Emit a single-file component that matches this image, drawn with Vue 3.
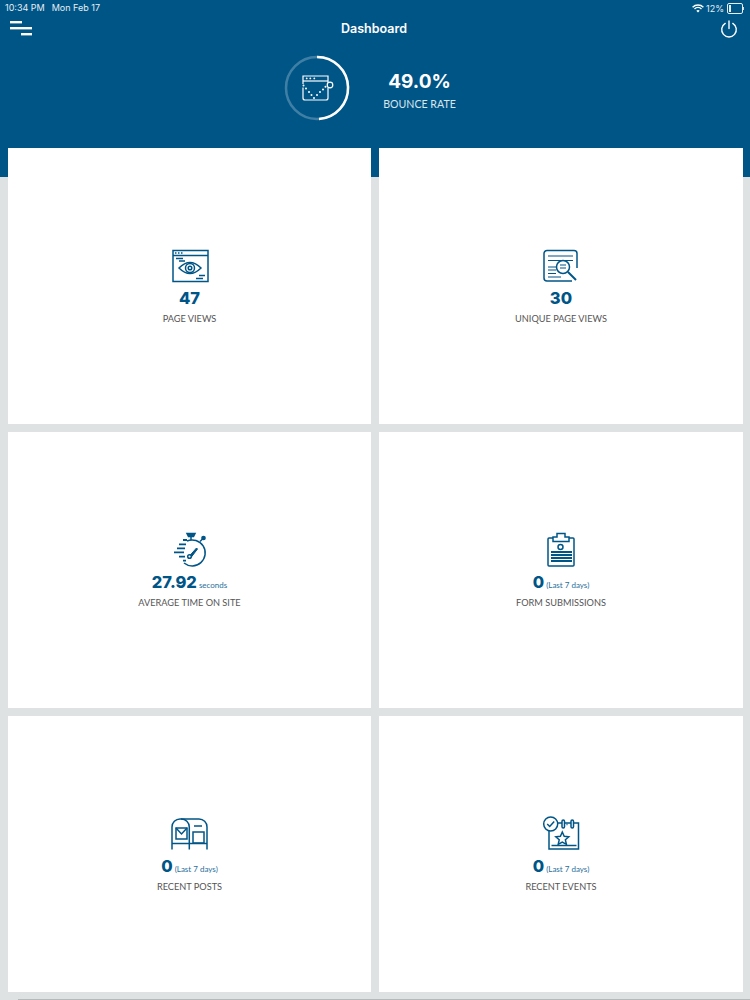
<script setup>
const cards = [
  { icon: 'views', value: '47', label: 'PAGE VIEWS' },
  { icon: 'unique', value: '30', label: 'UNIQUE PAGE VIEWS' },
  { icon: 'time', value: '27.92', unit: 'seconds', label: 'AVERAGE TIME ON SITE' },
  { icon: 'forms', value: '0', unit: '(Last 7 days)', label: 'FORM SUBMISSIONS' },
  { icon: 'posts', value: '0', unit: '(Last 7 days)', label: 'RECENT POSTS' },
  { icon: 'events', value: '0', unit: '(Last 7 days)', label: 'RECENT EVENTS' },
]
</script>

<template>
  <div class="page">
    <header class="top">
      <div class="status">
        <span class="time">10:34 PM</span>
        <span class="date">Mon Feb 17</span>
        <span class="status-right">
          <svg class="wifi" width="12" height="9" viewBox="0 0 12 9">
            <path d="M0.6 3.2a7.6 7.6 0 0 1 10.8 0" fill="none" stroke="#fff" stroke-width="1.4" />
            <path d="M2.5 5a5 5 0 0 1 7 0" fill="none" stroke="#fff" stroke-width="1.4" />
            <path d="M4.3 6.8a2.4 2.4 0 0 1 3.4 0L6 8.6z" fill="#fff" />
          </svg>
          <span>12%</span>
          <span class="battery"><i></i></span>
          <span class="nub"></span>
        </span>
      </div>

      <div class="nav">
        <svg width="24" height="16" viewBox="0 0 24 16" fill="#fff">
          <rect x="0" y="0" width="12" height="2.4" />
          <rect x="0" y="6" width="22" height="2.4" />
          <rect x="11" y="12" width="11" height="2.4" />
        </svg>
        <span class="title">Dashboard</span>
        <svg class="power" width="18" height="18" viewBox="0 0 18 18" fill="none" stroke="#fff" stroke-width="1.4" stroke-linecap="round">
          <path d="M5.2 3.4a7.3 7.3 0 1 0 7.6 0" />
          <path d="M9 1v7.6" />
        </svg>
      </div>

      <div class="bounce">
        <svg class="ring" width="68" height="68" viewBox="0 0 68 68">
          <circle cx="34" cy="34" r="31" fill="none" stroke="#fff" stroke-opacity="0.25" stroke-width="2.5" />
          <path d="M34 3a31 31 0 0 1 2 61.94" fill="none" stroke="#fff" stroke-width="2.5" />
          <g fill="none" stroke="#fff" stroke-width="1.2">
            <path d="M20 30V22h25v6.500" />
            <path d="M20 33.500V44a2 2 0 0 0 2 2h21a2 2 0 0 0 2-2V33.500" />
            <path d="M20 27h25" />
            <circle cx="47" cy="31" r="2.800" />
          </g>
          <g fill="#fff">
            <circle cx="23.700" cy="24.400" r="0.9" /><circle cx="27.300" cy="24.400" r="0.9" /><circle cx="31.300" cy="24.400" r="0.9" />
            <circle cx="20.500" cy="31.500" r="1" /><circle cx="23" cy="34.500" r="1" /><circle cx="26" cy="38" r="1" />
            <circle cx="28.500" cy="41" r="1" /><circle cx="31" cy="44" r="1" /><circle cx="34" cy="41" r="1" />
            <circle cx="37" cy="38" r="1" /><circle cx="40" cy="35.500" r="1" /><circle cx="42.500" cy="32.700" r="1" />
          </g>
        </svg>
        <div class="bounce-text">
          <div class="bounce-value">49.0%</div>
          <div class="bounce-label">BOUNCE RATE</div>
        </div>
      </div>
    </header>

    <main class="grid">
      <section v-for="c in cards" :key="c.label" class="card">
        <svg class="icon" width="40" height="36" viewBox="0 0 40 36" fill="none" stroke="#005587" stroke-width="1.5">
          <template v-if="c.icon === 'views'">
            <rect x="3" y="2.500" width="35" height="31" />
            <path d="M3 7.500h35" />
            <path d="M5 5h1.500M8 5h1.500M11 5h1.500" />
            <path d="M6 10.500h7M9 13h6M29 27.500h6M26 30.500h7" />
            <path d="M9 20q11-11 22 0q-11 11-22 0z" />
            <circle cx="20" cy="20" r="4.500" />
            <circle cx="20" cy="20" r="1.800" />
          </template>
          <template v-else-if="c.icon === 'unique'">
            <path d="M36 20V5.500a3 3 0 0 0-3-3H6a3 3 0 0 0-3 3V30a3 3 0 0 0 3 3h25" />
            <path d="M7 8h25M7 12.500h25M7 19h8M7 22h8M7 25.500h8M7 29h13" stroke-width="1.200" />
            <circle cx="22" cy="19" r="6.500" />
            <path d="M19 17h6M19 20h6" stroke-width="1" />
            <path d="M27 24l8 8" stroke-width="2" />
          </template>
          <template v-else-if="c.icon === 'time'">
            <path d="M17 9a13 13 0 1 1-3 22" />
            <path d="M17 1.500h8l-1.500 3h-5zM21 4v4" fill="#005587" />
            <path d="M30 9.500l3-3" stroke-width="1.500" />
            <circle cx="33.500" cy="6" r="1.600" fill="#005587" />
            <path d="M19 24.500l7.500-8.500 1 1-6.500 8.500z" fill="#005587" stroke-width="1" />
            <circle cx="19.500" cy="24.500" r="1.800" fill="#fff" />
            <path d="M13 8h4M9 12.300h7M7 16.300h8M4 20.300h10M9 24.700h6M13 28.700h3" stroke-width="1.800" />
          </template>
          <template v-else-if="c.icon === 'forms'">
            <path d="M12 6H8a1 1 0 0 0-1 1v26a1 1 0 0 0 1 1h24a1 1 0 0 0 1-1V7a1 1 0 0 0-1-1h-4" />
            <path d="M12 9.500V5h4V1.500h8V5h4v4.500z" />
            <circle cx="19.500" cy="15" r="2.500" />
            <path d="M10 20h21M10 23h21M10 26h21M10 29h21" stroke-width="1.800" />
          </template>
          <template v-else-if="c.icon === 'posts'">
            <path d="M2 33.500V11a8 8 0 0 1 8-8h19a8 8 0 0 1 8 8v22.500" />
            <path d="M19.300 11v22.500M2 27.500h35" />
            <path d="M11 3a8 8 0 0 1 8.300 8" />
            <rect x="6" y="12" width="11" height="11" />
            <path d="M6 12l5.500 6 5.500-6" />
            <rect x="23" y="16" width="11" height="11" />
            <path d="M24 10h8" />
          </template>
          <template v-else>
            <path d="M14 7h23.500v26H8V15" />
            <rect x="21" y="4" width="2.500" height="8" rx="1.200" fill="#fff" />
            <rect x="30" y="4" width="2.500" height="8" rx="1.200" fill="#fff" />
            <path d="M25.500 8.500h1" />
            <circle cx="9.700" cy="8" r="7" fill="#fff" />
            <path d="M6.200 8l2.500 2.500 4.500-5" />
            <path d="M21.300 16l1.900 4.200 4.600.5-3.400 3.100 1 4.500-4.100-2.300-4.100 2.300 1-4.500-3.400-3.100 4.600-.5z" />
            <path d="M10.500 29.500h25" />
          </template>
        </svg>
        <div class="value-row">
          <span class="value">{{ c.value }}</span>
          <span v-if="c.unit" class="unit">{{ c.unit }}</span>
        </div>
        <div class="label">{{ c.label }}</div>
      </section>
    </main>
    <div class="home-line"></div>
  </div>
</template>

<style>
body { background: #dfe2e2; }
</style>

<style scoped>
.page { width: 750px; height: 1000px; background: #dfe2e2; font-family: Inter, "Liberation Sans", sans-serif; overflow: hidden; }
.top { height: 177px; background: #005587; color: #fff; box-sizing: border-box; }

.status { display: flex; height: 14px; padding: 1px 6px 0 5px; font-size: 9px; line-height: 13px; color: #e6eef3; }
.date { margin-left: 7px; }
.status-right { margin-left: auto; display: flex; align-items: center; gap: 2px; }
.battery { width: 12px; height: 7px; border: 1px solid #fff; border-radius: 2px; display: block; padding: 1px; opacity: 0.9; margin-left: 1px; }
.battery i { display: block; width: 2px; height: 7px; background: #fff; }
.nub { width: 1px; height: 3px; background: #fff; margin-left: -2px; opacity: 0.8; }

.nav { display: grid; grid-template-columns: 1fr auto 1fr; align-items: center; height: 28px; padding: 0 12px 0 10px; }
.title { font-size: 12.5px; font-weight: 600; padding-bottom: 2px; }
.power { justify-self: end; }

.bounce { display: flex; align-items: center; justify-content: center; gap: 32px; margin-top: 11px; padding-right: 11px; }
.bounce-text { text-align: center; }
.bounce-value { font-size: 19px; font-weight: 700; line-height: 24px; padding-top: 3px; }
.bounce-label { font-family: Lato, "Liberation Sans", sans-serif; font-size: 10.6px; color: #d8e6ee; margin-top: 4px; }

.grid { display: grid; grid-template-columns: 363px 364px; grid-auto-rows: 276px; gap: 8px; padding-left: 8px; margin-top: -29px; }
.card { background: #fff; display: flex; flex-direction: column; align-items: center; justify-content: center; }
.icon { display: block; margin-top: 1px; }
.value-row { display: flex; align-items: baseline; gap: 2px; color: #005587; margin-top: 3px; height: 22px; }
.value { font-size: 16.5px; font-weight: 800; line-height: 22px; }
.unit { font-family: Lato, "Liberation Sans", sans-serif; font-size: 8px; color: #2a6f9b; }
.label { font-family: Lato, "Liberation Sans", sans-serif; font-size: 9.2px; color: #555; margin-top: 4px; line-height: 12px; }

.home-line { height: 1px; background: #b5b9b9; margin: 7px 0 0 18px; }
</style>
